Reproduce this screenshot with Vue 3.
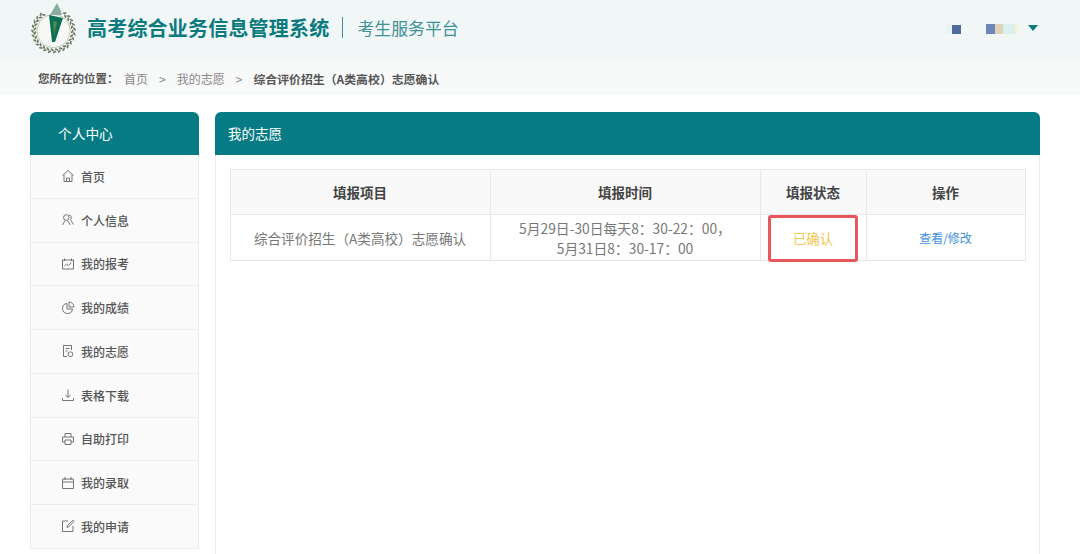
<template>
  <div class="page">
    <header class="top">
      <div class="brand">
        <svg class="logo" width="48" height="54" viewBox="0 0 48 54">
          <circle cx="24.5" cy="30" r="16.5" fill="#f7f8f3" stroke="#a9b39c" stroke-width="0.7" />
          <ellipse
            v-for="leaf in leaves"
            :key="leaf.id"
            :cx="leaf.x"
            :cy="leaf.y"
            rx="2"
            ry="0.9"
            fill="#6c7a60"
            :transform="`rotate(${leaf.rot} ${leaf.x} ${leaf.y})`"
          />
          <path d="M28 2 L31 8 L33 14 L21 14 Z" fill="#86ad9e" />
          <path d="M20 14 L34 17 L26 41 L23 41 Z" fill="#0d6f55" />
          <path d="M24 20 L28 21 L25 35 Z" fill="#4f8a50" />
        </svg>
        <h1 class="title">高考综合业务信息管理系统</h1>
        <span class="divider"></span>
        <span class="subtitle">考生服务平台</span>
      </div>
      <div class="user">
        <span class="blur-a"></span>
        <span class="blur-group">
          <i class="c1"></i><i class="c2"></i><i class="c3"></i><i class="c4"></i>
        </span>
        <span class="caret"></span>
      </div>
    </header>

    <div class="crumbs">
      <b class="here">您所在的位置：</b>
      <span>首页</span>
      <span class="sep">&gt;</span>
      <span>我的志愿</span>
      <span class="sep">&gt;</span>
      <b class="current">综合评价招生（A类高校）志愿确认</b>
    </div>

    <div class="body">
      <aside class="side">
        <div class="side-head">个人中心</div>
        <a v-for="item in menu" :key="item.name" class="side-item">
          <svg width="14" height="14" viewBox="0 0 14 14" fill="none" stroke="#666" stroke-width="0.9">
            <path v-for="d in item.paths" :key="d" :d="d" />
          </svg>
          <span>{{ item.name }}</span>
        </a>
      </aside>

      <main class="main">
        <div class="main-head">我的志愿</div>
        <div class="panel">
          <div class="table-wrap">
            <table>
              <colgroup>
                <col style="width: 260px" />
                <col style="width: 270px" />
                <col style="width: 106px" />
                <col style="width: 159px" />
              </colgroup>
              <thead>
                <tr>
                  <th>填报项目</th>
                  <th>填报时间</th>
                  <th>填报状态</th>
                  <th>操作</th>
                </tr>
              </thead>
              <tbody>
                <tr>
                  <td>综合评价招生（A类高校）志愿确认</td>
                  <td class="time">5月29日-30日每天8：30-22：00，<br />5月31日8：30-17：00</td>
                  <td class="status">已确认</td>
                  <td><a class="link">查看/修改</a></td>
                </tr>
              </tbody>
            </table>
            <div class="mark"></div>
          </div>
        </div>
      </main>
    </div>
  </div>
</template>

<script setup>
const menu = [
  { name: '首页', paths: ['M1.5 6.5 7 1.5l5.5 5', 'M3 5.5V12.5h8V5.5', 'M5.5 12.5V9h3v3.5'] },
  { name: '个人信息', paths: ['M2.5 4.5a2.8 2.8 0 1 0 5.6 0a2.8 2.8 0 1 0-5.6 0', 'M1.5 12 4 7.5', 'M6.5 7.5l3 4.5', 'M8 1.8a2.8 2.8 0 0 1 1.5 4.8l3 4.9'] },
  { name: '我的报考', paths: ['M1.5 3h11v9h-11z', 'M3.5 1.5V4', 'M10.5 1.5V4', 'M3.5 9l2-2 2 1.5 3-3'] },
  { name: '我的成绩', paths: ['M6 2.5a5 5 0 1 0 5.5 5.5H6z', 'M8 1a5 5 0 0 1 5 5H8z'] },
  { name: '我的志愿', paths: ['M10.5 6V1.5h-8v11H6', 'M4.5 4.5h4', 'M4.5 7h2', 'M7 10.2a2.4 2.4 0 1 0 4.8 0a2.4 2.4 0 1 0-4.8 0'] },
  { name: '表格下载', paths: ['M7 1.5v8', 'M4.5 7 7 9.5 9.5 7', 'M1.5 10v2.5h11V10'] },
  { name: '自助打印', paths: ['M4 5V1.5h6V5', 'M4 10H1.5V5h11v5H10', 'M4 8h6v4.5H4z'] },
  { name: '我的录取', paths: ['M1.5 3h11v9.5h-11z', 'M4 1v3', 'M10 1v3', 'M1.5 6h11'] },
  { name: '我的申请', paths: ['M7 2H1.5v10.5h10.5V7', 'M6 8.5l.5-2L12 1.2l1 1.2-5.3 5.5z'] },
]

// wreath around the emblem, open at the top
const leaves = []
for (let i = 0; i < 46; i++) {
  const deg = -58 + i * 6.6
  const a = (deg * Math.PI) / 180
  const r = i % 2 ? 18.8 : 21
  leaves.push({
    id: i,
    x: +(24.5 + r * Math.cos(a)).toFixed(2),
    y: +(30 + r * Math.sin(a)).toFixed(2),
    rot: +(deg + 90 + (i % 2 ? 35 : -35)).toFixed(1),
  })
}
</script>

<style>
html,
body {
  margin: 0;
  background: #fff;
}
</style>

<style scoped>
.page {
  height: 554px;
  overflow: hidden;
  font-family: "Noto Sans CJK SC", "Noto Sans", sans-serif;
  color: #666;
}

.top {
  height: 61px;
  box-sizing: border-box;
  background: #f1f6f7;
  display: flex;
  align-items: center;
  justify-content: space-between;
  padding: 0 42px 6px 29px;
}

.brand {
  display: flex;
  align-items: center;
}

.logo {
  margin-right: 10px;
}

.title {
  margin: 0;
  font-size: 20px;
  font-weight: 700;
  color: #0a7a80;
  letter-spacing: 0.2px;
  white-space: nowrap;
}

.divider {
  width: 1px;
  height: 21px;
  background: #3f9196;
  margin: 0 14px 0 13px;
}

.subtitle {
  font-size: 16.9px;
  color: #3f9196;
  white-space: nowrap;
}

.user {
  display: flex;
  align-items: center;
  margin-top: 3px;
}

.blur-a {
  display: block;
  width: 9px;
  height: 9px;
  background: #4f6a9c;
  box-shadow: -6px 0 0 #e8f4f6;
  margin-right: 25px;
}

.blur-group {
  display: flex;
  margin-right: 9px;
}

.blur-group i {
  display: block;
  height: 10px;
}

.c1 {
  width: 8.5px;
  background: #6f87b8;
}

.c2 {
  width: 8.5px;
  background: #e3d2b8;
}

.c3 {
  width: 12px;
  background: #daf0ef;
}

.c4 {
  width: 4px;
  background: #f2f6dc;
}

.caret {
  width: 0;
  height: 0;
  border-left: 5px solid transparent;
  border-right: 5px solid transparent;
  border-top: 6px solid #0a7a80;
  margin-top: -3px;
}

.crumbs {
  height: 34px;
  background: #f8f9f9;
  display: flex;
  align-items: center;
  padding-left: 38px;
  font-size: 12px;
  color: #888;
  white-space: nowrap;
}

.crumbs b {
  color: #555;
  font-weight: 700;
}

.crumbs .here {
  width: 86px;
  font-size: 11.5px;
}

.crumbs .current {
  font-size: 11.9px;
}

.sep {
  margin: 0 11px;
}

.body {
  display: flex;
  align-items: flex-start;
  gap: 16.5px;
  padding: 17px 40px 0 30px;
}

.side {
  width: 168.5px;
  flex: none;
}

.side-head {
  height: 43px;
  line-height: 43px;
  padding-left: 28px;
  background: #077b84;
  color: #fff;
  font-size: 13.7px;
  border-radius: 6px 6px 0 0;
}

.side-item {
  height: 43.75px;
  box-sizing: border-box;
  display: flex;
  align-items: center;
  gap: 6px;
  padding-left: 30px;
  background: #fafafa;
  border: 1px solid #ececec;
  border-top: none;
  font-size: 12px;
  font-weight: 500;
  color: #555;
}

.side-item svg {
  flex: none;
}

.main {
  flex: 1;
  min-width: 0;
}

.main-head {
  height: 43px;
  line-height: 43px;
  padding-left: 13px;
  background: #077b84;
  color: #fff;
  font-size: 13.5px;
  border-radius: 6px 6px 0 0;
}

.panel {
  height: 400px;
  border: 1px solid #ececec;
  border-top: none;
  padding: 14px 14px 0;
}

.table-wrap {
  position: relative;
}

table {
  width: 795px;
  margin-left: -0.5px;
  border-collapse: collapse;
  table-layout: fixed;
}

th,
td {
  border: 1px solid #e8e8e8;
  text-align: center;
  padding: 0;
}

th {
  height: 43px;
  padding-bottom: 1px;
  background: #f9f9f9;
  font-size: 13.5px;
  font-weight: 700;
  color: #444;
}

td {
  height: 45px;
  font-size: 13.6px;
  line-height: 20px;
  color: #777;
}

.time {
  font-size: 13.8px;
}

.status {
  color: #f3c44f;
  font-size: 13.4px;
}

.link {
  color: #3d8fdc;
  font-size: 12px;
}

/* red annotation drawn over the status cell */
.mark {
  position: absolute;
  left: 538px;
  top: 46px;
  width: 84px;
  height: 41px;
  border: 3px solid #e8575b;
  border-radius: 3px;
}
</style>
